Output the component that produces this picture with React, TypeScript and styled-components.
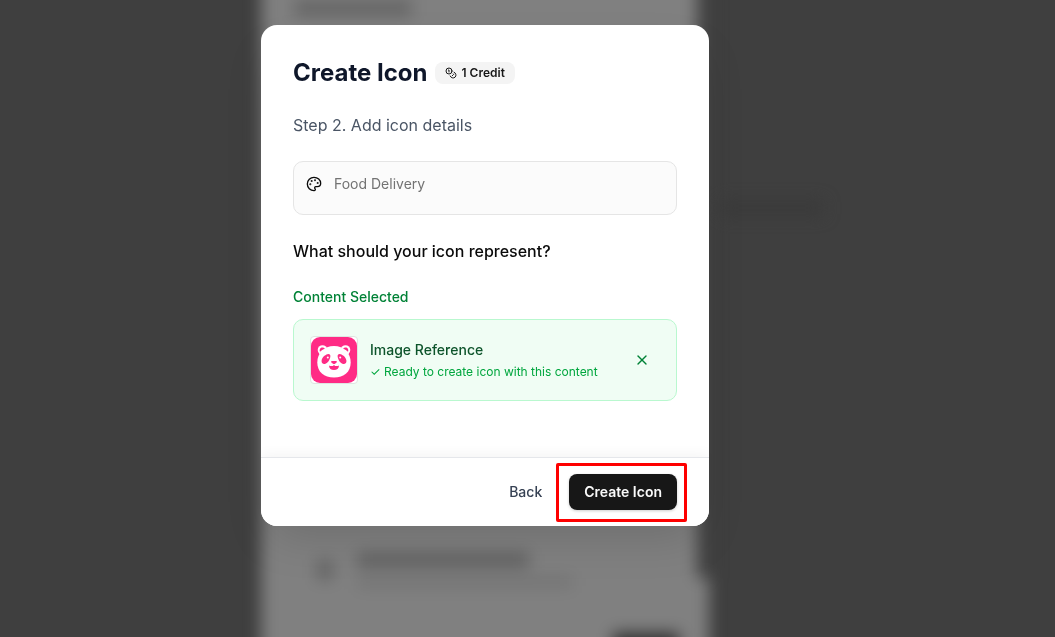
import React from "react";
import styled, { createGlobalStyle } from "styled-components";
import { Coins, Palette, X } from "lucide-react";

const GlobalStyle = createGlobalStyle`
  * { box-sizing: border-box; }
  body {
    margin: 0;
    background: #3f3f3f;
    font-family: Inter, "Liberation Sans", sans-serif;
    color: #0a0a0a;
  }
  h1, h2, p { margin: 0; }
  button { font: inherit; border: 0; cursor: pointer; }
`;

const Screen = styled.main`
  position: relative;
  min-height: 100vh;
  overflow: hidden;
  display: flex;
  justify-content: center;
  align-items: flex-start;
  padding: 25px 85px 24px 0;
`;

/* Blurred page behind the dialog */
const Backdrop = styled.div`
  position: absolute;
  inset: -24px 0;
  display: flex;
  justify-content: center;
  padding-right: 85px;
  filter: blur(8px);
`;

const BackPanel = styled.div`
  position: relative;
  width: 448px;
  flex: none;
  background: #808080;
`;

const Shade = styled.div<{ $x: number; $y: number; $w: number; $h: number; $c: string }>`
  position: absolute;
  left: ${(p) => p.$x}px;
  top: ${(p) => p.$y}px;
  width: ${(p) => p.$w}px;
  height: ${(p) => p.$h}px;
  background: ${(p) => p.$c};
`;

const Dialog = styled.section`
  position: relative;
  width: 100%;
  max-width: 448px;
  background: #fff;
  border-radius: 16px;
  box-shadow: 0 20px 48px -12px rgba(0, 0, 0, 0.16);
`;

const Body = styled.div`
  display: flex;
  flex-direction: column;
  gap: 24px;
  padding: 32px 32px 56px;
`;

const TitleRow = styled.div`
  display: flex;
  align-items: center;
  gap: 8px;
`;

const Title = styled.h1`
  font-size: 24px;
  line-height: 32px;
  font-weight: 700;
  color: #0f172a;
`;

const Badge = styled.span`
  display: inline-flex;
  align-items: center;
  gap: 4px;
  height: 22px;
  padding: 0 10px;
  border-radius: 8px;
  background: #f4f4f4;
  font-size: 12px;
  line-height: 16px;
  font-weight: 600;
  color: #171717;
`;

const Step = styled.p`
  font-size: 16px;
  line-height: 24px;
  color: #4a5565;
`;

const StyleField = styled.label`
  display: flex;
  gap: 12px;
  height: 54px;
  padding: 12px;
  border: 1px solid #e5e5e5;
  border-radius: 10px;
  background: #fbfbfb;

  svg { flex: none; margin-top: 2px; }
`;

const StyleInput = styled.input`
  flex: 1;
  min-width: 0;
  height: 20px;
  padding: 0;
  border: 0;
  outline: 0;
  background: none;
  font: 400 14px/20px Inter, "Liberation Sans", sans-serif;
  color: #737373;
`;

const Question = styled.h2`
  font-size: 16px;
  line-height: 24px;
  font-weight: 500;
`;

const Selection = styled.div`
  display: flex;
  flex-direction: column;
  gap: 12px;
`;

const SelectionLabel = styled.p`
  font-size: 14px;
  line-height: 20px;
  font-weight: 500;
  color: #008236;
`;

const Card = styled.div`
  display: flex;
  align-items: center;
  gap: 12px;
  padding: 16px;
  border: 1px solid #b9f8cf;
  border-radius: 10px;
  background: #f0fdf4;
`;

const Thumb = styled.div`
  width: 48px;
  height: 48px;
  flex: none;
  overflow: hidden;
  border: 1px solid #dfe5e1;
  border-radius: 4px;
  background: #fff;

  svg { display: block; width: 100%; height: 100%; }
`;

const CardText = styled.div`
  flex: 1;
  display: flex;
  flex-direction: column;
  gap: 4px;
`;

const CardTitle = styled.p`
  font-size: 14px;
  line-height: 20px;
  font-weight: 500;
  color: #0d542b;
`;

const CardNote = styled.p`
  font-size: 12px;
  line-height: 16px;
  color: #00a63e;
`;

const RemoveButton = styled.button`
  display: grid;
  place-items: center;
  width: 36px;
  height: 32px;
  padding: 0;
  background: none;
  color: #008236;
`;

const Footer = styled.footer`
  display: flex;
  justify-content: flex-end;
  gap: 12px;
  padding: 16px 32px;
  border-top: 1px solid #e5e7eb;
  border-radius: 0 0 16px 16px;
  background: #fff;
  box-shadow: 0 -4px 12px rgba(0, 0, 0, 0.04);
`;

const FooterButton = styled.button<{ $primary?: boolean }>`
  height: 36px;
  padding: 0 15px;
  border-radius: 8px;
  font-size: 14px;
  line-height: 20px;
  font-weight: ${(p) => (p.$primary ? 600 : 500)};
  color: ${(p) => (p.$primary ? "#fafafa" : "#364153")};
  background: ${(p) => (p.$primary ? "#171717" : "transparent")};
  box-shadow: ${(p) => (p.$primary ? "0 1px 3px rgba(0, 0, 0, 0.2)" : "none")};
`;

const Highlight = styled.div`
  position: relative;

  &::after {
    content: "";
    position: absolute;
    inset: -11px -10px -12px -13px;
    border: 3px solid #fe0000;
    border-radius: 2px;
    pointer-events: none;
  }
`;

function Panda() {
  return (
    <svg viewBox="0 0 46 46" role="img" aria-label="Panda icon">
      <rect width="46" height="46" rx="9" fill="#ff2b85" />
      <g fill="#fff">
        <circle cx="11.500" cy="13" r="4.800" />
        <circle cx="34.500" cy="13" r="4.800" />
        <path d="M23 9C13 9 6.300 16 6.300 25.500S13 40.500 23 40.500 39.700 35 39.700 25.500 33 9 23 9Z" />
      </g>
      <g fill="#ff2b85">
        <path d="M9 14.800c-1-2 .4-4.200 2.500-4.200 1 0 1.800.3 2.400.9-2 1-3.500 2.200-4.900 3.300Z" />
        <path d="M37 14.800c1-2-.4-4.200-2.500-4.200-1 0-1.800.3-2.400.9 2 1 3.500 2.200 4.900 3.300Z" />
        <path d="M16.500 17.200c2-.5 3.300.8 2.800 2.900-.7 3.200-2.600 6.400-5.300 6.900-2.300.4-3.700-1.200-3.400-3.500.4-2.800 3-5.600 5.900-6.300Z" />
        <path d="M29.500 17.200c-2-.5-3.300.8-2.800 2.900.7 3.200 2.600 6.400 5.300 6.900 2.300.4 3.700-1.200 3.400-3.500-.4-2.800-3-5.600-5.900-6.300Z" />
        <path d="M21 24h4c.8 0 1 .7.600 1.200l-1.500 1.500c-.7.500-1.500.5-2.200 0l-1.500-1.500c-.5-.5-.2-1.200.6-1.200Z" />
        <path d="M18 28.500c1.700.9 3.800.8 5-.6 1.200 1.400 3.300 1.500 5 .6 0 3-2.200 4.500-5 4.500s-5-1.500-5-4.500Z" />
      </g>
      <circle cx="16.800" cy="20.500" r="1" fill="#fff" />
      <circle cx="29.200" cy="20.500" r="1" fill="#fff" />
    </svg>
  );
}

export default function App() {
  return (
    <Screen>
      <GlobalStyle />
      <Backdrop aria-hidden="true">
        <BackPanel>
          <Shade $x={436} $y={0} $w={14} $h={602} $c="#424242" />
          <Shade $x={33} $y={24} $w={118} $h={16} $c="#646464" />
          <Shade $x={56} $y={584} $w={16} $h={20} $c="#646464" />
          <Shade $x={96} $y={577} $w={172} $h={14} $c="#606060" />
          <Shade $x={96} $y={600} $w={216} $h={12} $c="#747474" />
          <Shade $x={352} $y={657} $w={66} $h={40} $c="#303030" />
          <Shade $x={460} $y={225} $w={102} $h={14} $c="#3a3a3a" />
        </BackPanel>
      </Backdrop>
      <Dialog role="dialog" aria-labelledby="dialog-title">
        <Body>
          <TitleRow>
            <Title id="dialog-title">Create Icon</Title>
            <Badge>
              <Coins size={12} />1 Credit
            </Badge>
          </TitleRow>
          <Step>Step 2. Add icon details</Step>
          <StyleField>
            <Palette size={16} />
            <StyleInput aria-label="Icon style" defaultValue="Food Delivery" />
          </StyleField>
          <Question>What should your icon represent?</Question>
          <Selection>
            <SelectionLabel>Content Selected</SelectionLabel>
            <Card>
              <Thumb>
                <Panda />
              </Thumb>
              <CardText>
                <CardTitle>Image Reference</CardTitle>
                <CardNote>✓ Ready to create icon with this content</CardNote>
              </CardText>
              <RemoveButton type="button" aria-label="Remove content">
                <X size={16} />
              </RemoveButton>
            </Card>
          </Selection>
        </Body>
        <Footer>
          <FooterButton type="button">Back</FooterButton>
          <Highlight>
            <FooterButton type="button" $primary>
              Create Icon
            </FooterButton>
          </Highlight>
        </Footer>
      </Dialog>
    </Screen>
  );
}
